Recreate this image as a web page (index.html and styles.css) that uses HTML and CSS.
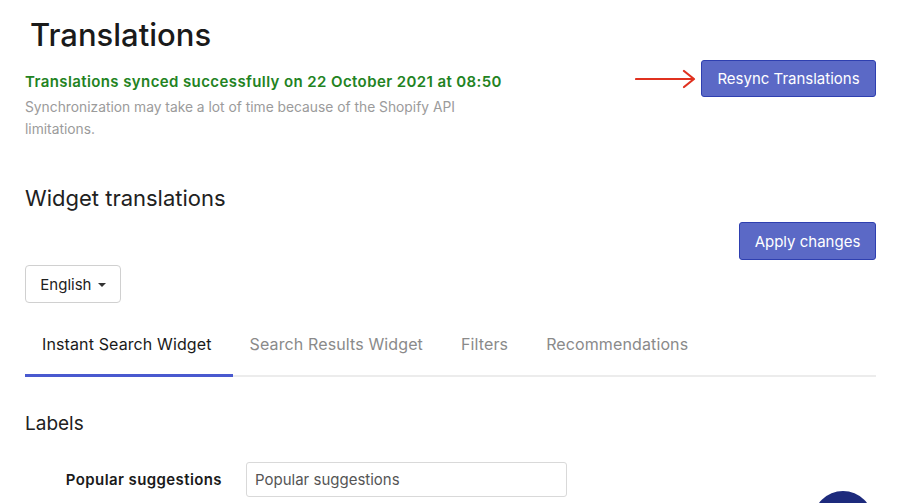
FILE: index.html
```html
<!DOCTYPE html>
<html>
<head>
<meta charset="utf-8">
<link rel="stylesheet" href="styles.css">
</head>
<body>
<div class="page">
  <h1 class="title">Translations</h1>
  <div class="sync-row">
    <div class="sync-info">
      <div class="sync-ok">Translations synced successfully on 22 October 2021 at 08:50</div>
      <div class="sync-note">Synchronization may take a lot of time because of the Shopify API limitations.</div>
    </div>
    <div class="sync-action">
      <svg class="arrow" width="62" height="20" viewBox="0 0 62 20"><path d="M1 10 H58 M49 2 L59 10 L49 18" fill="none" stroke="#e0311f" stroke-width="2.2" stroke-linecap="round" stroke-linejoin="round"/></svg>
      <button class="btn btn-resync">Resync Translations</button>
    </div>
  </div>

  <h2 class="section-title">Widget translations</h2>
  <div class="apply-row"><button class="btn btn-apply">Apply changes</button></div>
  <div class="lang-row"><button class="lang">English <span class="caret"></span></button></div>

  <div class="tabs">
    <div class="tab active">Instant Search Widget</div>
    <div class="tab">Search Results Widget</div>
    <div class="tab">Filters</div>
    <div class="tab">Recommendations</div>
  </div>

  <h3 class="labels">Labels</h3>
  <div class="field">
    <label class="field-label">Popular suggestions</label>
    <input class="field-input" type="text" value="Popular suggestions">
  </div>
</div>
<div class="chat-bubble"></div>
</body>
</html>
```
FILE: styles.css
```css
html, body {
  margin: 0;
  padding: 0;
  background: #fff;
  overflow: hidden;
}
body {
  font-family: Inter, Roboto, "Liberation Sans", sans-serif;
  color: #212121;
  width: 900px;
  height: 503px;
  position: relative;
}
.page {
  padding: 0 24px 0 25px;
}
.title {
  margin: 0;
  padding: 15px 0 0 5px;
  font-size: 31px;
  font-weight: 500;
  line-height: 40px;
  color: #1a1a1a;
}
.sync-row {
  display: flex;
  justify-content: space-between;
  align-items: flex-start;
  margin-top: 5px;
}
.sync-info {
  width: 490px;
  padding-top: 12px;
}
.sync-ok {
  color: #23831f;
  font-weight: 600;
  font-size: 15px;
  letter-spacing: 0.4px;
  line-height: 20px;
}
.sync-note {
  color: #9b9b9b;
  font-size: 13.8px;
  line-height: 22px;
  margin-top: 4px;
}
.sync-action {
  display: flex;
  align-items: center;
  gap: 4px;
}
.arrow {
  display: block;
}
.btn {
  background: #5b69c6;
  border: 1px solid #2e3fb0;
  border-radius: 3px;
  color: #fff;
  font-family: inherit;
  font-size: 15px;
  padding: 0;
  cursor: pointer;
}
.btn-resync {
  height: 37px;
  width: 175px;
}
.section-title {
  margin: 45px 0 0 0;
  font-size: 22px;
  font-weight: 400;
  line-height: 26px;
}
.apply-row {
  display: flex;
  justify-content: flex-end;
  margin-top: 11px;
}
.btn-apply {
  height: 38px;
  width: 137px;
}
.lang-row {
  margin-top: 5px;
}
.lang {
  height: 38px;
  width: 96px;
  background: #fff;
  border: 1px solid #d0d0d0;
  border-radius: 4px;
  font-family: inherit;
  font-size: 15px;
  color: #212121;
  padding: 0;
}
.caret {
  display: inline-block;
  width: 0;
  height: 0;
  border-left: 4px solid transparent;
  border-right: 4px solid transparent;
  border-top: 4px solid #333;
  vertical-align: middle;
  margin-left: 2px;
}
.tabs {
  display: flex;
  margin-top: 20px;
  border-bottom: 2px solid #ececec;
}
.tab {
  font-size: 16px;
  letter-spacing: 0.12px;
  color: #8a8a8a;
  padding: 10px 21px 19px 17px;
  line-height: 22px;
  margin-bottom: -2px;
  border-bottom: 3px solid transparent;
}
.tab.active {
  color: #1a1a1a;
  border-bottom-color: #4959cf;
}
.labels {
  margin: 35px 0 0 0;
  font-size: 19px;
  font-weight: 400;
  line-height: 24px;
}
.field {
  display: flex;
  align-items: center;
  margin-top: 26px;
}
.field-label {
  display: block;
  width: 221px;
  text-align: right;
  font-weight: 600;
  font-size: 15px;
  letter-spacing: 0.4px;
  color: #1a1a1a;
  padding-right: 24px;
  box-sizing: border-box;
}
.field-input {
  width: 321px;
  height: 35px;
  box-sizing: border-box;
  border: 1px solid #d9d9d9;
  border-radius: 3px;
  padding: 0 8px;
  font-family: inherit;
  font-size: 15px;
  color: #555;
}
.chat-bubble {
  position: absolute;
  left: 813px;
  top: 491px;
  width: 60px;
  height: 60px;
  border-radius: 50%;
  background: #1d2a7c;
}
```
